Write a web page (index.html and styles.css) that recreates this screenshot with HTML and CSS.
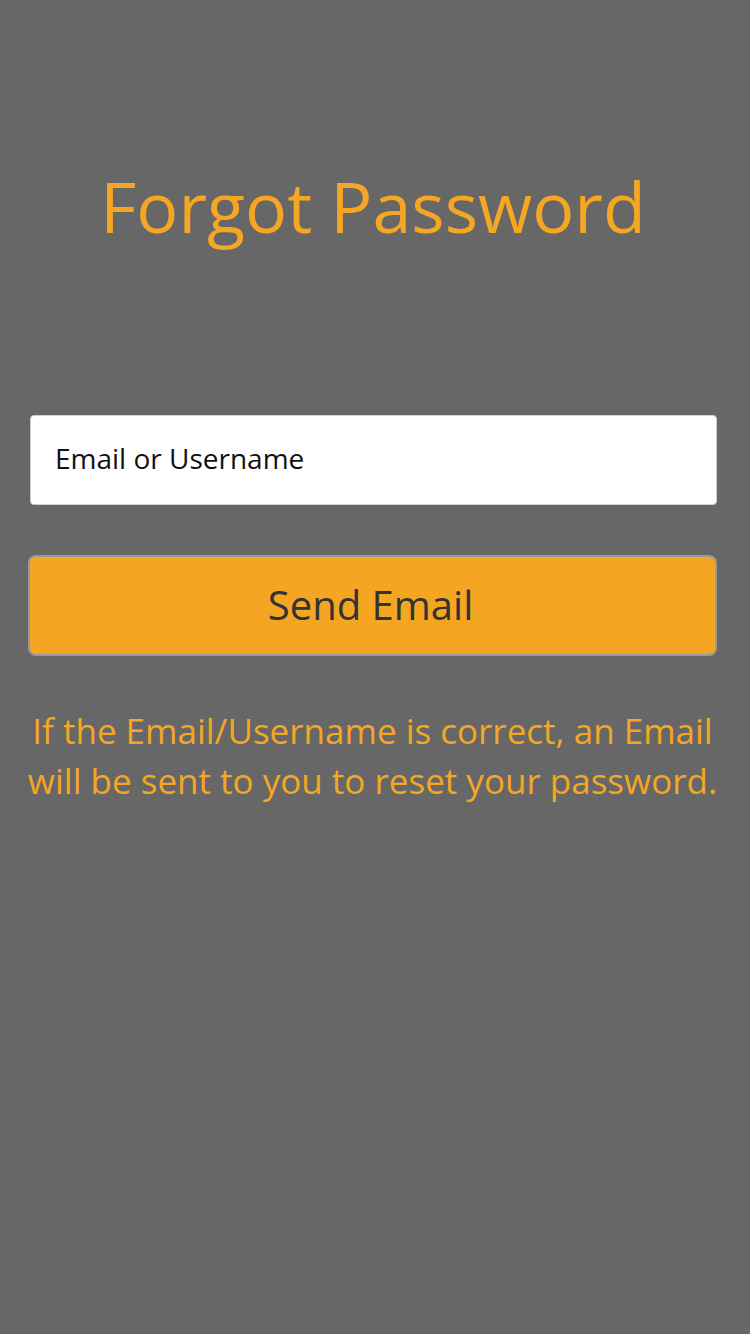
FILE: index.html
```html
<!DOCTYPE html>
<html lang="en">
<head>
<meta charset="utf-8">
<title>Forgot Password</title>
<link rel="stylesheet" href="styles.css">
</head>
<body>
<main class="page">
  <h1 class="title">Forgot Password</h1>
  <form class="form">
    <input class="field" type="text" placeholder="Email or Username">
    <button class="send" type="button">Send Email</button>
  </form>
  <p class="note">If the Email/Username is correct, an Email will be sent to you to reset your password.</p>
</main>
</body>
</html>
```
FILE: styles.css
```css
html, body {
  margin: 0;
  padding: 0;
  background: #676767;
  height: 100%;
}
body {
  font-family: "Open Sans", "Liberation Sans", sans-serif;
}
.page {
  padding: 159px 33px 0 29px;
  box-sizing: border-box;
}
.title {
  margin: 0;
  font-size: 70px;
  font-weight: 400;
  line-height: 95px;
  color: #f5a623;
  text-align: center;
}
.form {
  margin-top: 161px;
  display: flex;
  flex-direction: column;
  gap: 50px;
}
.field {
  box-sizing: border-box;
  height: 90px;
  margin-left: 1px;
  border: 1px solid #cfcfcf;
  border-radius: 4px;
  background: #fff;
  padding: 0 24px 5px;
  font-family: "Open Sans", sans-serif;
  font-size: 28px;
  color: #000;
  outline: none;
}
.field::placeholder {
  color: #111;
  opacity: 1;
}
.send {
  box-sizing: border-box;
  height: 101px;
  margin-left: -1px;
  border: 2px solid #9a9a9a;
  border-radius: 8px;
  background: #f4a623;
  font-family: "Open Sans", sans-serif;
  font-size: 40px;
  color: #333;
  padding: 0 4px 2px 0;
}
.note {
  margin: 50px -13px 0 -14px;
  font-size: 35px;
  line-height: 50px;
  color: #f5a623;
  text-align: center;
}
```
